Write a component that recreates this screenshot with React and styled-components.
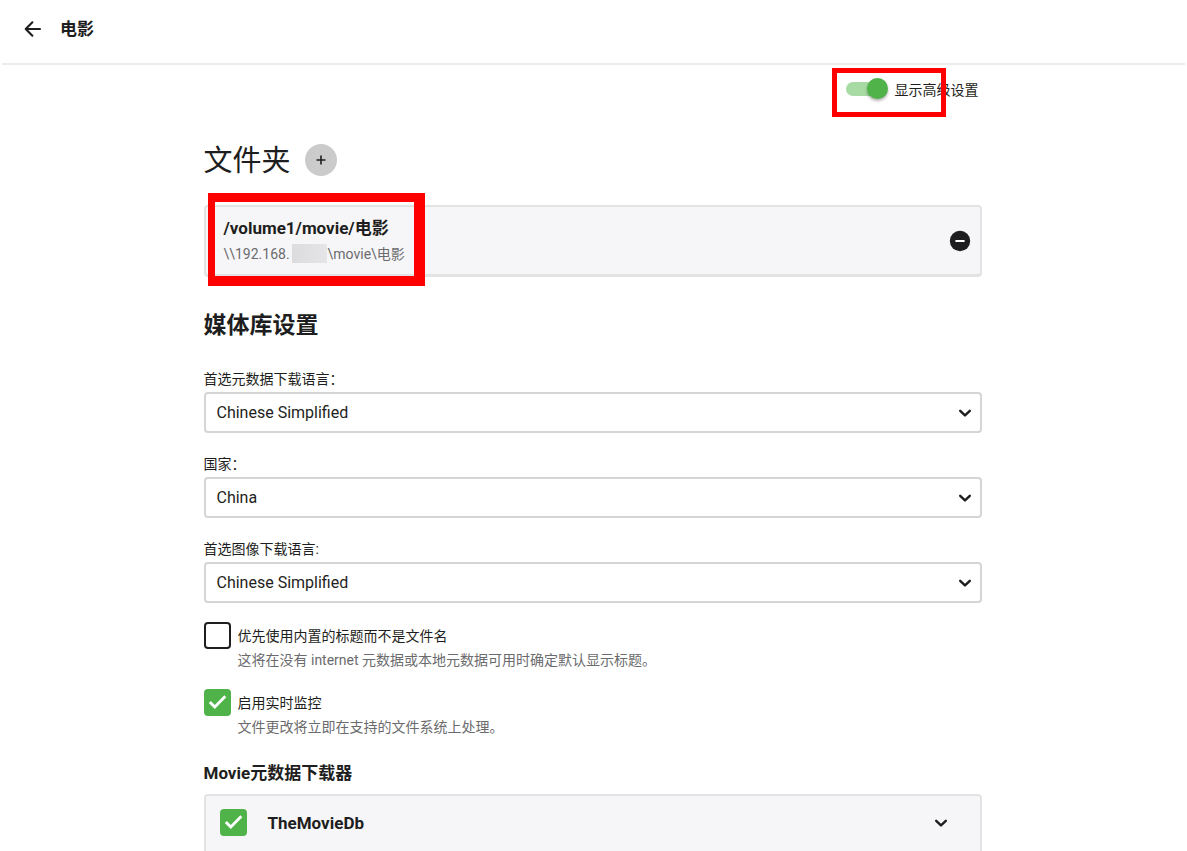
import React, { useState } from "react";
import styled, { createGlobalStyle } from "styled-components";

const GlobalStyle = createGlobalStyle`
  *, *::before, *::after { box-sizing: border-box; }
  html, body { margin: 0; background: #fff; }
  body {
    font-family: Roboto, "Noto Sans CJK SC", sans-serif;
    font-size: 14px;
    line-height: 20px;
    color: #1e1e20;
  }
  button, input, select { font: inherit; color: inherit; margin: 0; }
  svg { display: block; }
`;

const Page = styled.div`
  height: 100vh;
  display: flex;
  flex-direction: column;
  overflow: hidden;
`;

const Header = styled.header`
  flex: none;
  height: 65px;
  margin: 0 2px;
  padding: 0 17px 5px;
  display: flex;
  align-items: center;
  gap: 13px;
  border-bottom: 2px solid #ececec;
`;

const IconButton = styled.button`
  flex: none;
  width: ${(p) => p.$size}px;
  height: ${(p) => p.$size}px;
  padding: 0;
  border: 0;
  border-radius: 50%;
  display: flex;
  align-items: center;
  justify-content: center;
  background: ${(p) => p.$fill || "transparent"};
  cursor: pointer;
`;

const PageTitle = styled.h1`
  margin: 0;
  font-size: 17px;
  line-height: 24px;
  font-weight: 700;
`;

const Content = styled.main`
  flex: 1;
  min-height: 0;
  margin-right: 2px;
  overflow: hidden;
`;

const Column = styled.div`
  width: calc(100% - 32px);
  max-width: 778px;
  margin: 0 auto;
`;

const AdvancedRow = styled.div`
  display: flex;
  justify-content: flex-end;
`;

const ToggleLabel = styled.label`
  position: relative;
  height: 50px;
  padding-right: 3px;
  display: flex;
  align-items: center;
  gap: 7px;
  cursor: pointer;
`;

const Toggle = styled.input`
  appearance: none;
  position: relative;
  width: 42px;
  height: 24px;
  cursor: pointer;
  &::before {
    content: "";
    position: absolute;
    inset: 4px 1px 6px 0;
    border-radius: 7px;
    background: #c4c4c4;
  }
  &::after {
    content: "";
    position: absolute;
    top: 0;
    left: 0;
    width: 21px;
    height: 21px;
    border-radius: 50%;
    background: #fafafa;
    box-shadow: 0 2px 3px rgba(0, 0, 0, 0.3);
  }
  &:checked::before { background: #a8daa4; }
  &:checked::after { left: 21px; background: #4fb34a; }
`;

const ToggleMark = styled.span`
  position: absolute;
  top: 3px;
  left: -14px;
  width: 114px;
  height: 49px;
  border: 5px solid #fe0000;
  pointer-events: none;
`;

const FolderHeading = styled.div`
  margin: 29px 0;
  height: 32px;
  display: flex;
  align-items: center;
  gap: 14px;
  h2 {
    margin: 0;
    padding-top: 2px;
    font-size: 29px;
    line-height: 32px;
    font-weight: 400;
  }
`;

const Card = styled.div`
  position: relative;
  display: flex;
  align-items: center;
  background: #f6f6f9;
  border: 2px solid #e3e3e4;
  border-radius: 4px;
`;

const FolderCard = styled(Card)`
  height: 72px;
  padding: 0 9px 0 18px;
  border-bottom-width: 3px;
`;

const FolderText = styled.div`
  flex: 1;
  min-width: 0;
`;

const FolderPath = styled.div`
  font-size: 17px;
  line-height: 26px;
  font-weight: 700;
`;

const NetworkPath = styled.div`
  height: 26px;
  display: flex;
  align-items: center;
  color: #6b6b6d;
`;

const Redacted = styled.span`
  width: 35px;
  height: 19px;
  margin: 0 1px 0 2px;
  background: linear-gradient(90deg, #dcdcde, #e5e5e8);
`;

const FolderMark = styled.span`
  position: absolute;
  top: -14px;
  left: 2px;
  width: 217px;
  height: 93px;
  border: solid #fe0000;
  border-width: 9px 11px 10px 7px;
  pointer-events: none;
`;

const SectionTitle = styled.h2`
  margin: 33px 0 27px;
  font-size: 23px;
  line-height: 32px;
  font-weight: 700;
`;

const Fields = styled.div`
  display: flex;
  flex-direction: column;
  gap: 21px;
`;

const Field = styled.div`
  display: flex;
  flex-direction: column;
  gap: 3px;
`;

const SelectBox = styled.div`
  position: relative;
  svg {
    position: absolute;
    right: 10px;
    top: 14px;
    pointer-events: none;
  }
`;

const Select = styled.select`
  appearance: none;
  display: block;
  width: 100%;
  height: 41px;
  padding: 1px 40px 0 11px;
  border: 2px solid #d5d5d6;
  border-radius: 4px;
  background: #fff;
  font-size: 16px;
`;

const Options = styled.div`
  margin-top: 19px;
  display: flex;
  flex-direction: column;
  gap: 19px;
`;

const Option = styled.div`
  display: grid;
  grid-template-columns: 27px 1fr;
  column-gap: 7px;
  align-items: start;
  line-height: 28px;
  p {
    grid-column: 2;
    margin: 0;
    line-height: 20px;
    color: #6b6b6d;
  }
`;

const CheckWrap = styled.span`
  position: relative;
  flex: none;
  width: 27px;
  height: 27px;
  svg {
    position: absolute;
    inset: 0;
    pointer-events: none;
  }
`;

const CheckInput = styled.input`
  appearance: none;
  display: block;
  width: 27px;
  height: 27px;
  border: 2px solid #1e1e20;
  border-radius: 4px;
  background: #fff;
  cursor: pointer;
  &:checked { border-color: #4fb34a; background: #4fb34a; }
`;

const GroupTitle = styled.h3`
  margin: 24px 0 9px;
  font-size: 17px;
  line-height: 24px;
  font-weight: 700;
`;

const ProviderCard = styled(Card)`
  align-items: flex-start;
  padding: 13px 25px 40px 14px;
  gap: 21px;
  label {
    flex: 1;
    font-size: 17px;
    line-height: 28px;
    font-weight: 700;
  }
`;

const Chevron = () => (
  <svg width="14" height="14" viewBox="0 0 14 14" fill="none" stroke="#1e1e20" strokeWidth="2.4" strokeLinecap="round" strokeLinejoin="round" aria-hidden="true">
    <path d="M2.2 4.8 7 9.4 11.8 4.8" />
  </svg>
);

function Checkbox({ id, defaultChecked = false }) {
  const [checked, setChecked] = useState(defaultChecked);
  return (
    <CheckWrap>
      <CheckInput id={id} type="checkbox" checked={checked} onChange={(e) => setChecked(e.target.checked)} />
      {checked && (
        <svg width="27" height="27" viewBox="0 0 27 27" fill="none" stroke="#fff" strokeWidth="2.8" aria-hidden="true">
          <path d="M5.8 13 10.8 18 21.3 7.3" />
        </svg>
      )}
    </CheckWrap>
  );
}

const selects = [
  { id: "meta-language", label: "首选元数据下载语言：", value: "Chinese Simplified" },
  { id: "country", label: "国家：", value: "China" },
  { id: "image-language", label: "首选图像下载语言:", value: "Chinese Simplified" },
];

const options = [
  {
    id: "embedded-titles",
    label: "优先使用内置的标题而不是文件名",
    help: "这将在没有 internet 元数据或本地元数据可用时确定默认显示标题。",
    checked: false,
  },
  {
    id: "realtime-monitor",
    label: "启用实时监控",
    help: "文件更改将立即在支持的文件系统上处理。",
    checked: true,
  },
];

export default function App() {
  return (
    <Page>
      <GlobalStyle />
      <Header>
        <IconButton type="button" $size={28} aria-label="返回">
          <svg width="24" height="24" viewBox="0 0 24 24" fill="none" stroke="#1e1e20" strokeWidth="2.1" strokeLinecap="round" strokeLinejoin="round" aria-hidden="true">
            <path d="M19 12H5M11.4 5.3 4.7 12 11.4 18.7" />
          </svg>
        </IconButton>
        <PageTitle>电影</PageTitle>
      </Header>
      <Content>
        <Column>
          <AdvancedRow>
            <ToggleLabel>
              <Toggle type="checkbox" role="switch" defaultChecked />
              <span>显示高级设置</span>
              <ToggleMark />
            </ToggleLabel>
          </AdvancedRow>

          <FolderHeading>
            <h2>文件夹</h2>
            <IconButton type="button" $size={32} $fill="#cbcbcb" aria-label="添加文件夹">
              <svg width="10" height="10" viewBox="0 0 10 10" stroke="#1e1e20" strokeWidth="1.6" aria-hidden="true">
                <path d="M5 .5v9M.5 5h9" />
              </svg>
            </IconButton>
          </FolderHeading>

          <FolderCard>
            <FolderText>
              <FolderPath>/volume1/movie/电影</FolderPath>
              <NetworkPath>
                <span>{"\\\\192.168."}</span>
                <Redacted />
                <span>{"\\movie\\电影"}</span>
              </NetworkPath>
            </FolderText>
            <IconButton type="button" $size={22} aria-label="移除文件夹">
              <svg width="22" height="22" viewBox="0 0 22 22" aria-hidden="true">
                <circle cx="11" cy="11" r="10.2" fill="#1e1e20" />
                <path d="M6.4 11h9.2" stroke="#fff" strokeWidth="2" />
              </svg>
            </IconButton>
            <FolderMark />
          </FolderCard>

          <SectionTitle>媒体库设置</SectionTitle>
          <Fields>
            {selects.map((s) => (
              <Field key={s.id}>
                <label htmlFor={s.id}>{s.label}</label>
                <SelectBox>
                  <Select id={s.id} defaultValue={s.value}>
                    <option>{s.value}</option>
                  </Select>
                  <Chevron />
                </SelectBox>
              </Field>
            ))}
          </Fields>

          <Options>
            {options.map((o) => (
              <Option key={o.id}>
                <Checkbox id={o.id} defaultChecked={o.checked} />
                <label htmlFor={o.id}>{o.label}</label>
                <p>{o.help}</p>
              </Option>
            ))}
          </Options>

          <GroupTitle>Movie元数据下载器</GroupTitle>
          <ProviderCard>
            <Checkbox id="themoviedb" defaultChecked />
            <label htmlFor="themoviedb">TheMovieDb</label>
            <IconButton type="button" $size={28} aria-label="展开">
              <Chevron />
            </IconButton>
          </ProviderCard>
        </Column>
      </Content>
    </Page>
  );
}
